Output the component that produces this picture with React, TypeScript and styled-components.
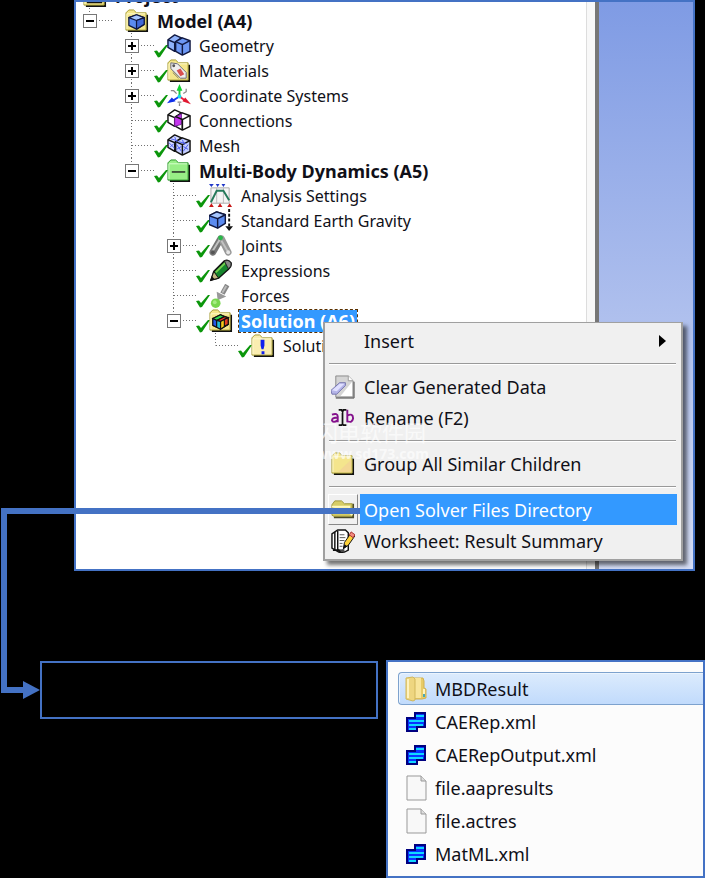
import React from "react";
import styled, { createGlobalStyle, css } from "styled-components";

const blue = "#4472c4";

const GlobalStyle = createGlobalStyle`
  *, *::before, *::after { box-sizing: border-box; }
  html, body { margin: 0; background: #000; }
  body { font-family: "Noto Sans", "Noto Sans CJK KR", sans-serif; color: #101018; }
  button { font: inherit; color: inherit; background: none; border: 0; padding: 0; text-align: left; }
  ul { list-style: none; margin: 0; padding: 0; }
  svg { display: block; flex: none; }
`;

const Page = styled.main`
  position: relative;
  display: flex;
  flex-direction: column;
  gap: 89px;
  overflow: hidden;
`;

const AppWindow = styled.section`
  position: relative;
  display: flex;
  margin: 0 10px 0 74px;
  border: 2px solid ${blue};
  background: #fff;
`;

const TreePane = styled.div`
  flex: 1;
  min-width: 0;
  overflow: hidden;
  padding-bottom: 211px;
`;

const Tree = styled.ul`
  && { margin-top: -19px; }
`;

const TreeRow = styled.li`
  display: flex;
  align-items: center;
  height: 25px;
`;

const dotsV = "repeating-linear-gradient(to bottom, #707070 0 1px, transparent 1px 3px)";
const dotsH = "repeating-linear-gradient(to right, #707070 0 1px, transparent 1px 3px)";

const Indent = styled.span<{ $level: number }>`
  flex: none;
  width: ${(p) => p.$level * 42}px;
`;

const Branch = styled.span<{ $last?: boolean }>`
  flex: none;
  display: flex;
  align-items: center;
  width: 36px;
  height: 25px;
  padding-left: 7px;
  background:
    ${dotsV} 13px 0 / 1px ${(p) => (p.$last ? "50%" : "100%")} no-repeat,
    ${dotsH} 14px 12px / 22px 1px no-repeat;
`;

const Expander = styled.button`
  && {
    display: grid;
    place-items: center;
    width: 14px;
    height: 14px;
    border: 1px solid #777;
    background: #fff;
  }
`;

const CheckSlot = styled.span`
  flex: none;
  width: 13px;
  padding-top: 11px;
  svg { overflow: visible; }
`;

const IconSlot = styled.span`
  flex: none;
  width: 24px;
  margin-right: 6px;
`;

const Label = styled.span<{ $bold?: boolean; $selected?: boolean }>`
  padding: 0 2px;
  font-size: 16px;
  line-height: 22px;
  white-space: nowrap;
  ${(p) =>
    p.$bold &&
    css`
      font-size: 18px;
      font-weight: 700;
    `}
  ${(p) =>
    p.$selected &&
    css`
      color: #fff;
      background: #3399ff;
      outline: 1px dashed #5a3000;
    `}
`;

const Splitter = styled.div`
  flex: none;
  width: 13px;
  border-left: 1px solid #ddd;
  border-right: 4px solid #777;
  background: #f8f8f8;
`;

const Viewport = styled.div`
  flex: none;
  width: 94px;
  background: linear-gradient(#7f9be4, #d5ddf5);
`;

const Menu = styled.div`
  position: absolute;
  top: 320px;
  left: 247px;
  right: 10px;
  padding: 2px 4px 3px 3px;
  border: 2px solid #a0a0a0;
  border-top-width: 1px;
  background: #f0f0f0;
  box-shadow: 4px 4px 4px rgba(0, 0, 0, 0.55);
`;

const MenuItem = styled.button`
  && {
    display: flex;
    align-items: stretch;
    gap: 2px;
    width: 100%;
    height: 31px;
    font-size: 18px;
    line-height: 30px;
  }
`;

const MenuIcon = styled.span<{ $active?: boolean }>`
  flex: none;
  display: grid;
  place-items: center;
  width: 30px;
  ${(p) =>
    p.$active &&
    css`
      border: 1px solid #fff;
      border-right-color: #888;
      border-bottom-color: #888;
    `}
`;

const MenuText = styled.span<{ $active?: boolean }>`
  flex: 1;
  display: flex;
  align-items: center;
  justify-content: space-between;
  padding: 0 11px 0 4px;
  white-space: nowrap;
  ${(p) => p.$active && css`color: #fff; background: #3399ff;`}
`;

const Separator = styled.hr`
  height: 2px;
  margin: 7px 1px 6px;
  border: 0;
  border-top: 1px solid #999;
  border-bottom: 1px solid #fff;
`;

const Watermark = styled.div`
  position: absolute;
  top: 415px;
  left: 240px;
  color: rgba(255, 255, 255, 0.65);
  font-family: "Noto Sans", "Noto Sans CJK SC", sans-serif;
  font-size: 22px;
  line-height: 30px;
  pointer-events: none;
`;

const WatermarkUrl = styled.div`
  font-size: 14px;
  line-height: 14px;
  font-weight: 700;
`;

const Bottom = styled.div`
  display: flex;
  align-items: flex-start;
  gap: 8px;
  padding-left: 40px;
`;

const NoteBox = styled.section`
  flex: none;
  width: 338px;
  height: 58px;
  margin-top: 1px;
  border: 2px solid ${blue};
`;

const Files = styled.ul`
  flex: 1;
  min-width: 0;
  && { padding: 10px 0 6px 10px; }
  border: 2px solid ${blue};
  background: #fcfcfc;
`;

const FileRow = styled.button<{ $selected?: boolean }>`
  && {
    display: flex;
    align-items: center;
    gap: 7px;
    width: 100%;
    height: 33px;
    padding-left: 5px;
    border: 1px solid transparent;
    font-size: 18px;
    line-height: 24px;
    white-space: nowrap;
    ${(p) =>
      p.$selected &&
      css`
        border-color: #7da2ce;
        border-right: 0;
        border-radius: 4px 0 0 4px;
        background: linear-gradient(#dcebfd, #c1dbfc);
        box-shadow: inset 1px 1px 0 #ebf4fe;
      `}
  }
`;

const Connector = styled.svg`
  position: absolute;
  left: 0;
  top: 500px;
  pointer-events: none;
`;

const Check = () => (
  <svg width="14" height="13" viewBox="0 0 14 13">
    <path d="M0 6 L3 5.500 L5 8 L12 0 L14 0 L6 12 L4 12.500 Z" fill="#0b960b" />
  </svg>
);

const FolderBase = ({ fill = "#f4e68a", dark = "#111" }: { fill?: string; dark?: string }) => (
  <g>
    <path d="M3 23 H23 V6" fill="none" stroke={dark} strokeWidth="2" />
    <path d="M1 22 V4 L4 1 H9 L12 4 H22 V22 Z" fill={fill} stroke="#a39a32" />
    <path d="M2 21 V5 H21" fill="none" stroke="#fffbd0" />
  </g>
);

const CubeShape = () => (
  <g stroke="#101840" strokeWidth="1.300" strokeLinejoin="round">
    <path d="M4 9 L12 6 L20 9 V16 L12 21 L4 17 Z" fill="#5b8bf0" />
    <path d="M4 9 L12 6 L20 9 L12 12 Z" fill="#a6c6ff" />
    <path d="M12 12 V21 L20 16 V9 Z" fill="#4068d8" />
  </g>
);

const TwinCubes = ({ a, b, line }: { a: string; b: string; line: string }) => (
  <g stroke={line} strokeWidth="1.500" strokeLinejoin="round">
    <path d="M1 6 L8 1 L15 4 V15 L8 18 L1 14 Z" fill={a} />
    <path d="M1 6 L8 9 L15 4 M8 9 V18" fill="none" />
    <path d="M9 8 L16 4 L24 7 V18 L16 22 L9 18 Z" fill={b} />
    <path d="M9 8 L16 11 L24 7 M16 11 V22" fill="none" />
  </g>
);

type IconName =
  | "project" | "model" | "geometry" | "materials" | "axes" | "connections" | "mesh" | "dynamics"
  | "settings" | "gravity" | "joints" | "pencil" | "force" | "solution" | "info"
  | "erase" | "rename" | "folder" | "open" | "worksheet";

const art: Record<IconName, React.ReactNode> = {
  project: <><FolderBase /><path d="M5 8 H19 V19 H5 Z" fill="#4a77d8" stroke="#111" strokeWidth="2" /></>,
  model: <><FolderBase /><CubeShape /></>,
  geometry: <TwinCubes a="#8fb2fa" b="#6d98f4" line="#101840" />,
  materials: (
    <>
      <FolderBase />
      <path d="M4 4 L11 5 L20 14 V20 H14 L4 10 Z" fill="#eee" stroke="#667" />
      <path d="M10 12 L14 10 L18 16 L14 18 Z" fill="#d85050" />
      <circle cx="7" cy="7" r="1.500" fill="#555" />
      <path d="M6 14 L12 20" stroke="#776" />
    </>
  ),
  axes: (
    <g strokeWidth="2">
      <path d="M13 13 V4" stroke="#18c838" /><path d="M10 7 L13 0 L16 7 Z" fill="#10d030" />
      <path d="M13 13 L5 18" stroke="#1838f0" /><path d="M0 20 L5 14 L9 18 Z" fill="#1030e8" />
      <path d="M13 13 L20 18" stroke="#f02040" /><path d="M25 21 L19 14 L16 18 Z" fill="#e01830" />
      <path d="M4 7 H7 L10 10 M17 10 L20 8 V5 M11 19 H15 M13 20 V23" stroke="#888" strokeWidth="1.300" fill="none" />
      <circle cx="13" cy="13" r="2" fill="#18d8e8" />
    </g>
  ),
  connections: (
    <>
      <TwinCubes a="#fff" b="#fff" line="#111" />
      <path d="M8 9 L15 5 V16 L8 18 Z" fill="#c535ee" stroke="#702090" />
      <path d="M9 8 L16 11 V22" stroke="#111" fill="none" strokeWidth="1.500" />
    </>
  ),
  mesh: (
    <>
      <TwinCubes a="#d6dcff" b="#c4ceff" line="#111" />
      <path d="M2 9 L8 15 M4 5 L11 7 M8 3 L10 8 M10 11 L15 18 M12 8 L20 10 M16 6 L18 11 M22 11 L17 18 M3 14 L7 10 M10 16 L15 13 M17 13 L22 16" stroke="#4c5cf0" />
    </>
  ),
  dynamics: (
    <>
      <path d="M3 23 H23 V6" fill="none" stroke="#111" strokeWidth="2" />
      <path d="M1 22 V4 L4 1 H9 L12 4 H22 V22 Z" fill="#98ee86" stroke="#279327" />
      <path d="M2 21 V5 H21" fill="none" stroke="#d8ffd0" />
      <path d="M5 13.500 H19" stroke="#222" strokeWidth="1.500" />
    </>
  ),
  settings: (
    <>
      <path d="M2 4 H21 V20 H2 Z" fill="#f4f4f4" stroke="#aaa" />
      <path d="M8 4 V20 M15 4 V20" stroke="#bbb" />
      <path d="M2 19 L8 7 H15 L21 17" fill="none" stroke="#25795a" strokeWidth="2" />
      <path d="M0 0 H5 L2.500 3 Z M7 0 H11 L9 3 Z M13 0 H17 L15 3 Z" fill="#2038c8" />
      <path d="M0 24 L2.500 20 L5 24 Z M9 24 L11.500 20 L14 24 Z M19 24 L21.500 20 L24 24 Z" fill="#c81818" />
    </>
  ),
  gravity: (
    <>
      <g stroke="#101840" strokeWidth="1.500" strokeLinejoin="round">
        <path d="M0 7 L8 3 L17 6 V15 L9 20 L0 16 Z" fill="#5b8bf0" />
        <path d="M0 7 L8 3 L17 6 L9 10 Z" fill="#a6c6ff" />
        <path d="M9 10 V20" />
      </g>
      <path d="M21 0 V18" stroke="#111" strokeWidth="2" strokeDasharray="3 2" />
      <path d="M17 18 H25 L21 23 Z" fill="#111" />
    </>
  ),
  joints: (
    <>
      <path d="M12 5 L4 19" stroke="#777" strokeWidth="7" strokeLinecap="round" />
      <path d="M13 5 L20 19" stroke="#999" strokeWidth="7" strokeLinecap="round" />
      <path d="M11 6 L3 19 M13 7 L20 19" stroke="#c2c2c2" strokeWidth="2" />
      <circle cx="12" cy="4" r="2.500" fill="#28b848" />
      <circle cx="20" cy="19" r="2" fill="#e5e5e5" /><circle cx="4" cy="19" r="2" fill="#555" />
    </>
  ),
  pencil: (
    <>
      <path d="M2 22 L5 13 L16 2 Q20 0 23 4 Q24 8 20 11 L10 20 Z" fill="#15852c" stroke="#111" strokeWidth="1.500" />
      <path d="M7 14 L17 4" stroke="#78d050" strokeWidth="2" />
      <path d="M2 22 L5 13 L10 20 Z" fill="#c5b883" stroke="#111" />
      <path d="M16 2 Q20 0 23 4 Q24 8 20 10 Z" fill="#888" stroke="#222" />
      <path d="M1 23 L3 18 L6 21 Z" fill="#111" />
    </>
  ),
  force: (
    <>
      <path d="M19 1 L14 10" stroke="#888" strokeWidth="5" />
      <path d="M8 8 L18 13 L9 17 Z" fill="#999" /><path d="M18 2 L14 9" stroke="#bbb" strokeWidth="2" />
      <circle cx="7" cy="20" r="5" fill="#79d64f" /><circle cx="6" cy="19" r="2" fill="#a5ec83" />
    </>
  ),
  solution: (
    <>
      <FolderBase />
      <g stroke="#111" strokeWidth="1.200">
        <path d="M4 10 L12 6 L20 9 V16 L12 21 L4 17 Z" fill="#20c848" />
        <path d="M4 10 L12 6 L16 8 L8 12 Z" fill="#30d850" />
        <path d="M8 12 L16 8 L20 9 L12 13 Z" fill="#ef3820" />
        <path d="M12 13 L20 9 V16 L12 21 Z" fill="#f5cb18" />
        <path d="M4 10 L8 12 V19 L4 17 Z" fill="#2458e8" />
        <path d="M8 12 L12 13 V21 L8 19 Z" fill="#20c0d8" />
        <path d="M16 11 L20 9 V16 L16 18 Z" fill="#e43c20" />
      </g>
    </>
  ),
  info: (
    <>
      <FolderBase fill="#faedb0" />
      <path d="M10 6 H14 V12 L13 16 H11 L10 12 Z M11 18 H14 V21 H11 Z" fill="#1020ee" />
    </>
  ),
  erase: (
    <>
      <path d="M5 1 H18 L23 6 V23 H5 Z" fill="#d5d5d5" stroke="#888" />
      <path d="M18 1 V6 H23" fill="#fff" stroke="#999" />
      <path d="M22 7 L10 22 H22 Z" fill="#fff" />
      <path d="M5 24 H24 V7" fill="none" stroke="#444" />
      <path d="M0 16 L9 8 H15 V11 L6 20 H1 Z" fill="#b4b4e8" stroke="#7777ad" />
      <path d="M1 16 L9 9 H14 L6 17 Z" fill="#e0e0ff" />
    </>
  ),
  rename: (
    <>
      <g fill="none" stroke="#84118c" strokeWidth="2">
        <path d="M1 9 Q7 7 7 11 V17 M7 12 Q1 12 1 15 Q2 18 7 15" />
        <path d="M17 4 V17 M17 10 Q23 7 23 13 Q22 18 17 16" />
      </g>
      <path d="M8 4 H11 L12 6 L13 4 H16 M12 5 V19 M8 20 H11 L12 19 L13 20 H16" stroke="#111" strokeWidth="1.800" fill="none" />
    </>
  ),
  folder: <><FolderBase fill="#f4e58d" /><path d="M7 21 L21 8 V21 Z" fill="#f2c99c" opacity=".5" /></>,
  open: (
    <>
      <path d="M3 20 H23 V6" stroke="#4b4a2a" strokeWidth="2" fill="none" />
      <path d="M1 18 V7 L4 3 H11 L14 6 H22 V19 H3 Z" fill="#d6cc66" stroke="#9c9438" />
      <path d="M1 9 H19 V12 L22 18" fill="#f6ef9d" stroke="#fff8bd" strokeWidth="2" />
    </>
  ),
  worksheet: (
    <>
      <path d="M1 5 L7 1 H15 L18 4 V22 L14 24 H8 L1 20 Z" fill="#fff" stroke="#111" strokeWidth="1.500" />
      <path d="M4 3 V21 M7 2 V22 H14" stroke="#111" strokeWidth="1.500" fill="none" />
      <path d="M2 22 H8 L10 25 H13" stroke="#111" strokeWidth="2" fill="none" />
      <path d="M9 6 H14 M9 9 H15 M9 12 H14 M9 15 H12 M9 18 H12" stroke="#555" />
      <path d="M13 20 L14 14 L21 4 L25 7 L18 17 Z" fill="#ffd238" stroke="#111" />
      <path d="M19 6 L21 3 L25 6 L23 9 Z" fill="#f28a80" stroke="#a33" />
      <path d="M12 22 L14 16 L17 18 Z" fill="#111" />
    </>
  ),
};

const Icon = ({ name }: { name: IconName }) => (
  <svg width="24" height="24" viewBox="0 0 25 25" aria-hidden="true">{art[name]}</svg>
);

type FileKind = "folder" | "xml" | "blank";

const FileIcon = ({ kind }: { kind: FileKind }) => (
  <svg width="24" height="26" viewBox="0 0 24 26" aria-hidden="true">
    {kind === "folder" && (
      <>
        <path d="M9 2 H19 L20 5 V12 L22 13 V22 L18 23 H9 Z" fill="#e7cb68" stroke="#d1b050" />
        <path d="M11 2 H17 V22 H11 Z" fill="#f8e59b" />
        <path d="M2 2 L9 1 L11 3 V24 L9 25 L2 23 Z" fill="#eed680" stroke="#d1b75a" />
        <path d="M4 3 V22" stroke="#fff2bd" strokeWidth="2" />
        <path d="M19 13 H21 V21 H19 Z" fill="#fff4bf" /><path d="M19 18 H21 V21 H19 Z" fill="#48a8b8" />
      </>
    )}
    {kind === "xml" && (
      <>
        <path d="M3 9 H11 V4 H21 V18 H13 V22 H3 Z" fill="#0834ff" stroke="#000080" strokeWidth="2" />
        <path d="M12 7 H20 M5 12 H20 M5 16 H19 M5 20 H12" stroke="#10d8ff" strokeWidth="2" />
      </>
    )}
    {kind === "blank" && (
      <>
        <path d="M3 1 H17 L22 6 V25 H3 Z" fill="#f8f8f8" stroke="#999" />
        <path d="M17 1 V6 H22" fill="#ddd" stroke="#999" />
      </>
    )}
  </svg>
);

type Node = {
  label: string;
  icon: IconName;
  level: number;
  toggle?: "plus" | "minus";
  checked?: boolean;
  last?: boolean;
  bold?: boolean;
  selected?: boolean;
};

const nodes: Node[] = [
  { label: "Model (A4)", icon: "model", level: 0, toggle: "minus", last: true, bold: true },
  { label: "Geometry", icon: "geometry", level: 1, toggle: "plus", checked: true },
  { label: "Materials", icon: "materials", level: 1, toggle: "plus", checked: true },
  { label: "Coordinate Systems", icon: "axes", level: 1, toggle: "plus", checked: true },
  { label: "Connections", icon: "connections", level: 1, checked: true },
  { label: "Mesh", icon: "mesh", level: 1, checked: true },
  { label: "Multi-Body Dynamics (A5)", icon: "dynamics", level: 1, toggle: "minus", checked: true, last: true, bold: true },
  { label: "Analysis Settings", icon: "settings", level: 2, checked: true },
  { label: "Standard Earth Gravity", icon: "gravity", level: 2, checked: true },
  { label: "Joints", icon: "joints", level: 2, toggle: "plus", checked: true },
  { label: "Expressions", icon: "pencil", level: 2, checked: true },
  { label: "Forces", icon: "force", level: 2, checked: true },
  { label: "Solution (A6)", icon: "solution", level: 2, toggle: "minus", checked: true, last: true, bold: true, selected: true },
  { label: "Solution Information", icon: "info", level: 3, checked: true, last: true },
];

const RootRow = styled(TreeRow)`
  padding-left: 7px;
`;

const files: { name: string; kind: FileKind }[] = [
  { name: "MBDResult", kind: "folder" },
  { name: "CAERep.xml", kind: "xml" },
  { name: "CAERepOutput.xml", kind: "xml" },
  { name: "file.aapresults", kind: "blank" },
  { name: "file.actres", kind: "blank" },
  { name: "MatML.xml", kind: "xml" },
];

const Entry = ({ label, icon, active, submenu }: { label: string; icon?: IconName; active?: boolean; submenu?: boolean }) => (
  <MenuItem role="menuitem">
    <MenuIcon $active={active}>{icon && <Icon name={icon} />}</MenuIcon>
    <MenuText $active={active}>
      {label}
      {submenu && <svg width="7" height="12"><path d="M0 0 L7 6 L0 12 Z" fill="#000" /></svg>}
    </MenuText>
  </MenuItem>
);

export default function App() {
  return (
    <Page>
      <GlobalStyle />
      <AppWindow>
        <TreePane>
          <Tree>
            <RootRow>
              <IconSlot><Icon name="project" /></IconSlot>
              <Label $bold>Project</Label>
            </RootRow>
            {nodes.map((n) => (
              <TreeRow key={n.label}>
                <Indent $level={n.level} />
                <Branch $last={n.last}>
                  {n.toggle && (
                    <Expander aria-label={`Toggle ${n.label}`}>
                      <svg width="8" height="8">
                        <path d={n.toggle === "plus" ? "M0 4 H8 M4 0 V8" : "M0 4 H8"} stroke="#000" strokeWidth="2" />
                      </svg>
                    </Expander>
                  )}
                </Branch>
                <CheckSlot>{n.checked && <Check />}</CheckSlot>
                <IconSlot><Icon name={n.icon} /></IconSlot>
                <Label $bold={n.bold} $selected={n.selected}>{n.label}</Label>
              </TreeRow>
            ))}
          </Tree>
        </TreePane>
        <Splitter />
        <Viewport />
        <Menu role="menu">
          <Entry label="Insert" submenu />
          <Separator />
          <Entry label="Clear Generated Data" icon="erase" />
          <Entry label="Rename (F2)" icon="rename" />
          <Separator />
          <Entry label="Group All Similar Children" icon="folder" />
          <Separator />
          <Entry label="Open Solver Files Directory" icon="open" active />
          <Entry label="Worksheet: Result Summary" icon="worksheet" />
        </Menu>
        <Watermark>
          闪电软件园
          <WatermarkUrl>www.sd173.com</WatermarkUrl>
        </Watermark>
      </AppWindow>
      <Bottom>
        <NoteBox />
        <Files>
          {files.map((f, i) => (
            <li key={f.name}>
              <FileRow $selected={i === 0}>
                <FileIcon kind={f.kind} />
                {f.name}
              </FileRow>
            </li>
          ))}
        </Files>
      </Bottom>
      <Connector width="362" height="204" viewBox="0 0 362 204" aria-hidden="true">
        <path d="M360 11 H4 V190 H24" fill="none" stroke={blue} strokeWidth="6" />
        <path d="M23 181 L40 190 L23 199 Z" fill={blue} />
      </Connector>
    </Page>
  );
}
